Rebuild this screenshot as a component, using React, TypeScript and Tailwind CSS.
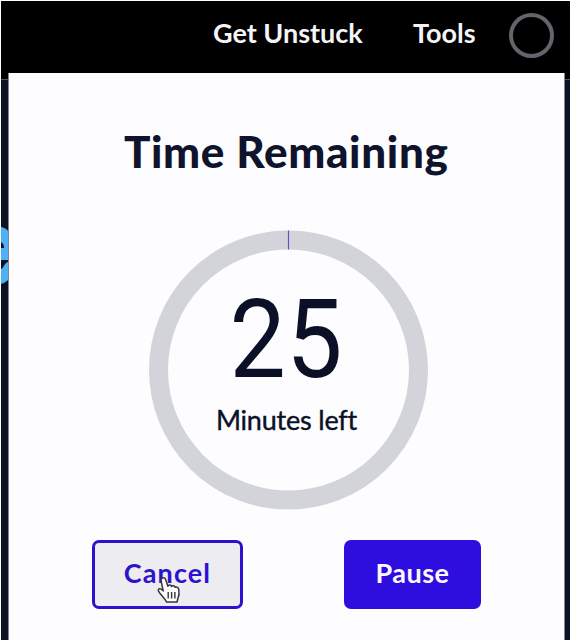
import React from "react";

const family = "font-['Lato','Open_Sans',sans-serif]";

function Header() {
  return (
    <header className="flex h-[72px] shrink-0 items-start bg-black pl-[212px] text-[27px] font-bold leading-[32px] text-[#f5f5f7]">
      <a className="mt-[16px] w-[200px] whitespace-nowrap">Get Unstuck</a>
      <a className="mt-[16px] w-[96px] whitespace-nowrap">Tools</a>
      <span className="mt-[12px] size-[45px] rounded-full border-[4px] border-[#67636d]" />
    </header>
  );
}

function Dial() {
  return (
    <div className="ml-[139px] mt-[52px] grid size-[280px] shrink-0 place-items-start">
      <svg viewBox="0 0 280 280" className="col-start-1 row-start-1 size-[280px]" fill="none">
        <circle cx="140.5" cy="140" r="130" stroke="#d3d4d9" strokeWidth="19" />
        <path d="M140.5 .5v19" stroke="#6651bd" strokeWidth="1.2" />
      </svg>
      <div className="col-start-1 row-start-1 flex w-[280px] flex-col items-center pt-[60px] text-[#0b1026]">
        <span className="-ml-[3px] scale-x-[.91] font-['Roboto',sans-serif] text-[110px] leading-[100px] tracking-[0.5px]">25</span>
        <span className="-ml-[3px] mt-[14px] whitespace-nowrap text-[27px] leading-[32px] tracking-[-0.2px] [-webkit-text-stroke:0.4px_#0b1026]">
          Minutes left
        </span>
      </div>
    </div>
  );
}

function HandCursor() {
  return (
    <svg viewBox="0 0 26 29" className="absolute left-[61px] top-[33px] h-[29px] w-[26px]">
      <path
        d="M6.2 2.2C8 1 9.2 2.2 9.8 4l2.1 6.2c.8-1.6 3-1.4 3.7.3 1-1.3 3.1-.9 3.5.8 1.6-.9 3.4.1 3.7 2.2.5 3.7.4 6.1-.8 8.5L21 26H10.5c-1.3-3.6-4.4-5.5-6.8-9.1-1-1.6-2-2.3-1.4-3.3.9-1.6 3.3-.7 4.9 1.3L5.2 5.4c-.4-1.2-.2-2.5 1-3.2Z"
        fill="#fff"
        stroke="#35343d"
        strokeWidth="1.5"
        strokeLinejoin="round"
      />
      <path d="M12.2 16v6.5M15.6 16v6.5M18.9 16v6.5" stroke="#35343d" strokeWidth="1.4" />
    </svg>
  );
}

function Panel() {
  return (
    <main className="flex w-[557px] shrink-0 flex-col border-x border-[#85858f] bg-[#fdfcff]">
      <h1 className="ml-[115px] mt-[52px] whitespace-nowrap text-[44px] font-black leading-[53px] tracking-[0.65px] text-[#0f132b]">
        Time Remaining
      </h1>
      <Dial />
      <div className="ml-[83px] mt-[30px] flex gap-[101px] text-[27px] font-bold">
        <button className="relative h-[69px] w-[151px] rounded-[7px] border-[3px] border-[#2c12ce] bg-[#edecf0] pb-[2px] tracking-[1.1px] text-[#2c12ce]">
          Cancel
          <HandCursor />
        </button>
        <button className="h-[69px] w-[137px] rounded-[7px] bg-[#2e0edf] pb-[2px] tracking-[0.5px] text-[#fbf9ff]">Pause</button>
      </div>
    </main>
  );
}

export default function App() {
  return (
    <div className={`flex h-[640px] w-[570px] flex-col overflow-hidden border-l border-t border-white bg-[#0e1124] ${family}`}>
      <Header />
      <div className="flex min-h-0 flex-1">
        <aside className="w-[7px] shrink-0 overflow-hidden border-t-[6px] border-black">
          <div className="h-px bg-[#55555d]" />
          <svg viewBox="0 0 7 60" className="mt-[146px] h-[60px] w-[7px]">
            <path d="M0 1C4 2 6 3 7 5v29H0Z" fill="#4eb1f5" />
            <path d="M0 16c2 1 3 3 3 6H0Z" fill="#0e1124" />
            <path d="M0 43c3-1 3-6 7-7v18c-2 2-4 3-7 4Z" fill="#4eb1f5" />
          </svg>
        </aside>
        <Panel />
        <aside className="min-w-0 flex-1 border-t-[6px] border-black">
          <div className="h-px bg-[#55555d]" />
        </aside>
      </div>
    </div>
  );
}
